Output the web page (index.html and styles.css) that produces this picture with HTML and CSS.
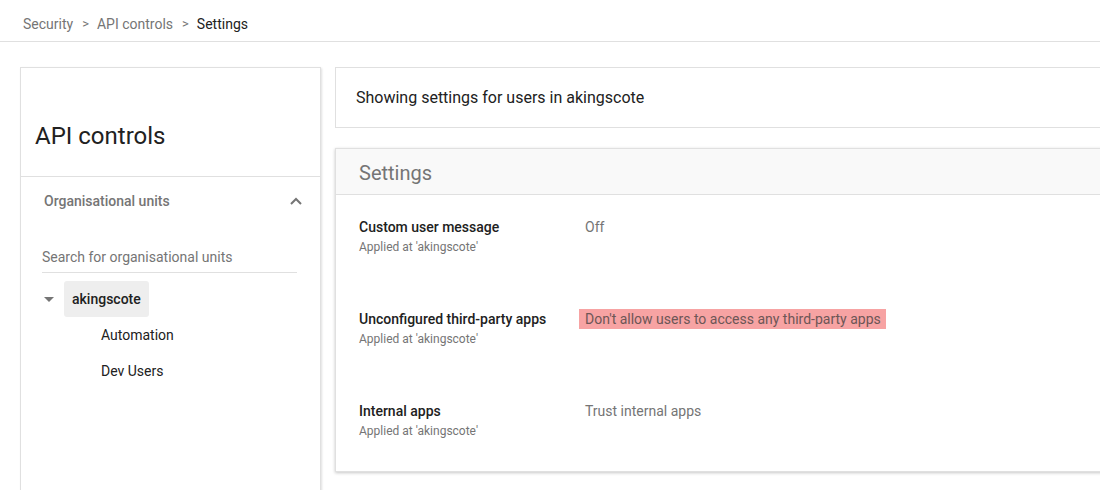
FILE: index.html
```html
<!DOCTYPE html>
<html>
<head>
<meta charset="utf-8">
<link rel="stylesheet" href="styles.css">
</head>
<body>
<nav class="crumbs">
  <span class="crumb">Security</span>
  <span class="sep">&gt;</span>
  <span class="crumb">API controls</span>
  <span class="sep">&gt;</span>
  <span class="crumb current">Settings</span>
</nav>
<main class="main">
  <aside class="side">
    <h1 class="side-title">API controls</h1>
    <div class="ou-head">
      <span>Organisational units</span>
      <svg class="chev" width="14" height="10" viewBox="0 0 14 10"><path d="M2 8 L7 3 L12 8" fill="none" stroke="#757575" stroke-width="2"/></svg>
    </div>
    <div class="search">Search for organisational units</div>
    <ul class="tree">
      <li class="node root">
        <svg class="tri" width="10" height="6" viewBox="0 0 10 6"><path d="M0 0 L10 0 L5 5 Z" fill="#757575"/></svg>
        <span class="chip">akingscote</span>
      </li>
      <li class="node child">Automation</li>
      <li class="node child">Dev Users</li>
    </ul>
  </aside>
  <section class="content">
    <div class="card scope">Showing settings for users in akingscote</div>
    <div class="card settings">
      <div class="settings-head">Settings</div>
      <div class="row">
        <div class="label">
          <div class="name">Custom user message</div>
          <div class="applied">Applied at 'akingscote'</div>
        </div>
        <div class="value">Off</div>
      </div>
      <div class="row">
        <div class="label">
          <div class="name">Unconfigured third-party apps</div>
          <div class="applied">Applied at 'akingscote'</div>
        </div>
        <div class="value"><span class="hl">Don't allow users to access any third-party apps</span></div>
      </div>
      <div class="row">
        <div class="label">
          <div class="name">Internal apps</div>
          <div class="applied">Applied at 'akingscote'</div>
        </div>
        <div class="value">Trust internal apps</div>
      </div>
    </div>
  </section>
</main>
</body>
</html>
```
FILE: styles.css
```css
* { box-sizing: border-box; }
html, body { margin: 0; padding: 0; }
body {
  font-family: Roboto, "Liberation Sans", Arial, sans-serif;
  background: #fff;
  color: #212121;
  width: 1100px;
  height: 490px;
  overflow: hidden;
}
.crumbs {
  height: 42px;
  border-bottom: 1px solid #e0e0e0;
  display: flex;
  align-items: center;
  padding: 6px 0 0 23px;
  font-size: 14px;
  color: #757575;
}
.sep { margin: 0 8px 0 9px; font-size: 13px; }
.current { color: #212121; }

.main {
  display: flex;
  align-items: flex-start;
  padding: 25px 0 0 20px;
  gap: 14px;
}
.side {
  flex: 0 0 301px;
  height: 440px;
  border: 1px solid #e0e0e0;
  border-bottom: none;
  box-shadow: 1px 1px 2px rgba(0,0,0,0.12);
  background: #fff;
}
.side-title {
  margin: 0;
  font-size: 24px;
  font-weight: 400;
  line-height: 28px;
  padding: 54px 0 26px 14px;
  border-bottom: 1px solid #e0e0e0;
  color: #212121;
}
.ou-head {
  height: 48px;
  display: flex;
  align-items: center;
  justify-content: space-between;
  padding: 0 17px 0 23px;
  font-size: 14px;
  font-weight: 500;
  color: #757575;
}
.chev { display: block; }
.search {
  margin: 22px 23px 0 21px;
  font-size: 14px;
  line-height: 20px;
  color: #757575;
  padding-bottom: 5px;
  border-bottom: 1px solid #e0e0e0;
}
.tree {
  list-style: none;
  margin: 8px 0 0 0;
  padding: 0;
}
.node {
  height: 36px;
  display: flex;
  align-items: center;
  font-size: 14px;
}
.root { padding-left: 23px; }
.tri { margin-right: 10px; margin-top: 1px; }
.chip {
  background: #eeeeee;
  border-radius: 3px;
  height: 36px;
  line-height: 36px;
  padding: 0 8px;
  font-weight: 500;
  color: #212121;
}
.child { padding-left: 80px; color: #212121; }

.content {
  flex: 0 0 790px;
  display: flex;
  flex-direction: column;
  gap: 20px;
}
.card {
  border: 1px solid #e0e0e0;
  background: #fff;
}
.scope {
  height: 61px;
  display: flex;
  align-items: center;
  padding-left: 20px;
  font-size: 16px;
  color: #212121;
}
.settings {
  box-shadow: 0 1px 3px rgba(0,0,0,0.22);
}
.settings-head {
  height: 46px;
  background: #f9f9f9;
  border-bottom: 1px solid #e0e0e0;
  padding: 2px 0 0 23px;
  display: flex;
  align-items: center;
  font-size: 20px;
  color: #757575;
}
.row {
  height: 92px;
  display: flex;
  padding: 22px 0 0 23px;
}
.label { width: 226px; }
.name {
  font-size: 14px;
  line-height: 20px;
  font-weight: 500;
  color: #212121;
}
.applied {
  font-size: 12px;
  line-height: 16px;
  margin-top: 2px;
  color: #757575;
}
.value {
  font-size: 14px;
  line-height: 20px;
  color: #757575;
}
.hl {
  display: inline-block;
  background: #f7a3a3;
  margin-left: -6px;
  padding: 0 5px 0 6px;
  line-height: 20px;
  color: #6d5656;
}
```
